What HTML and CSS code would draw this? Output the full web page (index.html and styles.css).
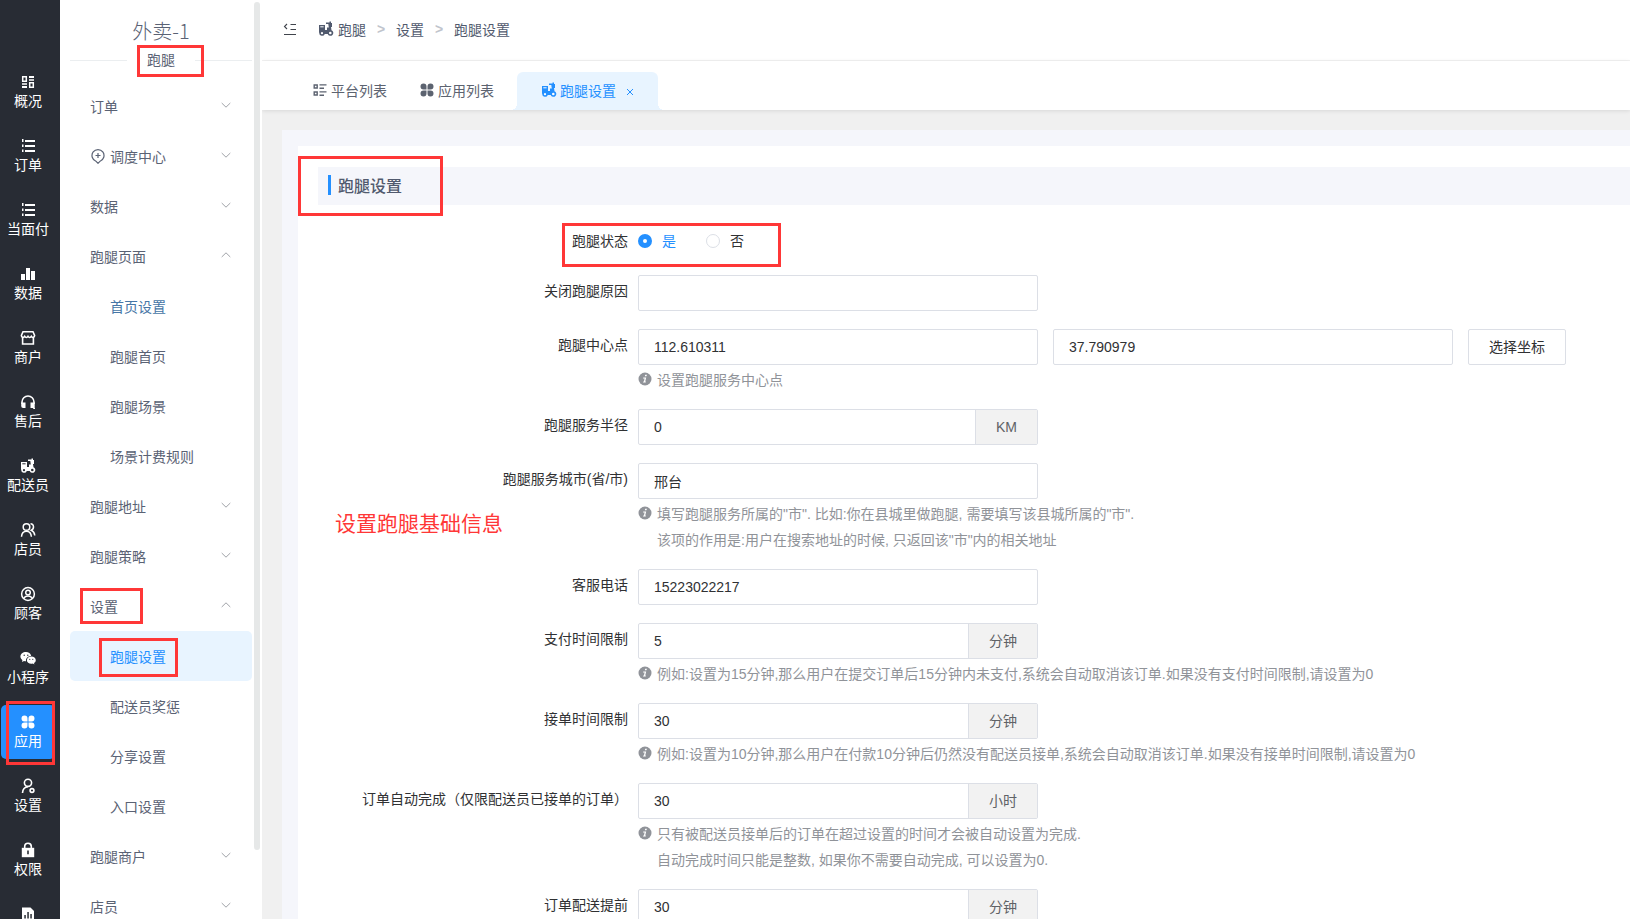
FILE: index.html
```html
<!DOCTYPE html>
<html lang="zh-CN">
<head>
    <meta charset="UTF-8" />
    <meta name="viewport" content="width=device-width, initial-scale=1.0" />
    <title>跑腿设置</title>
    <link rel="stylesheet" href="styles.css">
</head>
<body>

    <!-- icon sprite -->
    <svg class="sprite" xmlns="http://www.w3.org/2000/svg">
        <symbol id="i-grid" viewBox="0 0 16 16"><path d="M2.700 2.700h3.600v4.600H2.700zM9.700 8.700h3.600v4.600H9.700z" fill="none" stroke="currentColor" stroke-width="1.500"/><path d="M9 2h5v2H9zM9 5.200h5v1.600H9zM2 9.200h5v1.600H2zM2 12h5v2H2z"/></symbol>
        <symbol id="i-list" viewBox="0 0 16 16"><path d="M5 2h10v2H5zM5 7h10v2H5zM5 12h10v2H5zM2 1h1.500v3H2zM2 6.500h1.500v2.500H2zM2 11.500h1.500V14H2z"/></symbol>
        <symbol id="i-bars" viewBox="0 0 16 16"><path d="M1 8h4v6H1zM6 2h4v12H6zM11 5h4v9h-4z"/></symbol>
        <symbol id="i-shop" viewBox="0 0 16 16"><path d="M3 1.800h10l1.600 3.600c0 2-2.400 2.600-3.300 1-.8 1.400-2.500 1.400-3.300 0-.8 1.400-2.500 1.400-3.300 0-.9 1.600-3.300 1-3.300-1zM2.600 7.500V14h10.800V7.500" fill="none" stroke="currentColor" stroke-width="1.600"/></symbol>
        <symbol id="i-headset" viewBox="0 0 16 16"><path d="M2 10V8a6 6 0 0 1 12 0v2" fill="none" stroke="currentColor" stroke-width="1.600"/><path d="M1.300 8.500h4.200V14H3.200a2 2 0 0 1-2-2zM10.500 8.500h4.200V14H15v1h-1.500L12.800 14h-2.300z"/></symbol>
        <symbol id="i-scooter" viewBox="0 0 16 16"><path d="M1 4h6v5h2V6.500h1.800L10.300 3H8V1.500h3.500V.5H13V2h1v4h-1l.5 3.200a2.900 2.900 0 1 1-3.800 3.800H6.800A2.900 2.900 0 0 1 1.200 12L1 11z"/><circle cx="4" cy="12.200" r="1.100" class="hole"/><circle cx="12.300" cy="12" r="1.300" class="hole"/><path d="M2.300 5.300h3.300v1H2.300z" class="hole"/></symbol>
        <symbol id="i-users" viewBox="0 0 16 16"><g fill="none" stroke="currentColor" stroke-width="1.500"><circle cx="6.500" cy="5" r="3.300"/><path d="M1.500 14.800c.2-3.300 2.200-5.500 5-5.500s4.600 2.200 4.900 5.500M10.500 1.700c3.700.3 4 5 .8 6.500 2 .8 3.200 2.600 3.500 5.300"/></g></symbol>
        <symbol id="i-user-circle" viewBox="0 0 16 16"><g fill="none" stroke="currentColor" stroke-width="1.500"><circle cx="8" cy="8" r="6.400"/><circle cx="8" cy="6.500" r="2.300"/><path d="M3.800 12.500c1.500-3.500 6.900-3.500 8.400 0"/></g></symbol>
        <symbol id="i-wechat" viewBox="0 0 16 16"><path d="M6 2C2.900 2 .4 4 .4 6.600c0 1.500.8 2.700 2 3.600L2 12l2-1c.7.2 1.300.2 2 .2-.3-3 2-5.200 5.200-5.200C10.700 3.600 8.600 2 6 2z"/><path d="M15.800 10.200c0-2-2-3.600-4.500-3.600s-4.400 1.600-4.400 3.600 1.900 3.600 4.400 3.600c.6 0 1.100-.1 1.600-.2l1.500.8-.4-1.300c1.100-.7 1.800-1.700 1.800-2.900z"/><g class="hole"><circle cx="4.200" cy="5.300" r=".7"/><circle cx="7.800" cy="5.300" r=".7"/><circle cx="9.800" cy="9.300" r=".6"/><circle cx="12.800" cy="9.300" r=".6"/></g></symbol>
        <symbol id="i-apps" viewBox="0 0 16 16"><path d="M4.500 1.500a3 3 0 0 1 3 3v3h-3a3 3 0 0 1 0-6zM11.500 1.500a3 3 0 0 1 0 6h-3v-3a3 3 0 0 1 3-3zM4.500 8.500h3v3a3 3 0 1 1-3-3zM8.500 8.500h3a3 3 0 1 1-3 3z"/></symbol>
        <symbol id="i-user-gear" viewBox="0 0 16 16"><g fill="none" stroke="currentColor" stroke-width="1.600"><circle cx="8" cy="4.800" r="3.600"/><path d="M2.500 15c.2-3.500 2.500-6 5.500-6.200"/><circle cx="12" cy="12.500" r="1.900"/></g></symbol>
        <symbol id="i-lock" viewBox="0 0 16 16"><path d="M4.700 6V4.500a3.300 3.300 0 0 1 6.600 0V6" fill="none" stroke="currentColor" stroke-width="1.600"/><path d="M1.800 5.800h12.400v9.400H1.800z"/><path d="M7.200 8.500h1.600v3.800H7.200z" class="hole"/></symbol>
        <symbol id="i-report" viewBox="0 0 16 16"><path d="M2 1.500h8.500L14 5v10H2z"/><path d="M4.300 9h1.500v3.500H4.300zM7.300 6h1.500v6.500H7.300zM10.300 8h1.500v4.500h-1.500z" class="hole"/></symbol>
        <symbol id="i-pin" viewBox="0 0 16 16"><path d="M5.900 13.200 8 15.300l2.100-2.100A6 6 0 1 0 5.900 13.200zM8 5v5M5.500 7.500h5" fill="none" stroke="currentColor" stroke-width="1.200"/></symbol>
        <symbol id="i-fold" viewBox="0 0 16 16"><path d="M8.500 3.500H14M8.500 8.500H14M2 13.500h12M5 3 2.500 5.500 5 8" fill="none" stroke="currentColor" stroke-width="1.100"/></symbol>
        <symbol id="i-platform" viewBox="0 0 16 16"><path d="M2.200 3h3v3h-3zM2.200 10h3v3h-3z" fill="none" stroke="currentColor" stroke-width="1.400"/><path d="M7.500 2.200h7v1.400h-7zM7.500 5.500H12v1.400H7.500zM7.500 9.200h7v1.400h-7zM7.500 12.500H12v1.400H7.500z"/></symbol>
        <symbol id="i-down" viewBox="0 0 10 10"><path d="m.7 3 4.300 4.200L9.300 3" fill="none" stroke="currentColor"/></symbol>
        <symbol id="i-up" viewBox="0 0 10 10"><path d="M.7 7 5 2.800 9.300 7" fill="none" stroke="currentColor"/></symbol>
        <symbol id="i-close" viewBox="0 0 8 8"><path d="m1 1 6 6M7 1 1 7" fill="none" stroke="currentColor"/></symbol>
        <symbol id="i-info" viewBox="0 0 14 14"><circle cx="7" cy="7" r="6.500"/><path d="M7.200 2.700h1.700l-.4 1.600H6.800zM5.300 5.500h2.900l-1 4h.7l-.2 1H5l.3-1h.6l.7-3H5z" fill="#fff"/></symbol>
    </svg>

    <nav class="rail">
        <a href="#" class="rail-item"><svg><use href="#i-grid"/></svg><span>概况</span></a>
        <a href="#" class="rail-item"><svg><use href="#i-list"/></svg><span>订单</span></a>
        <a href="#" class="rail-item"><svg><use href="#i-list"/></svg><span>当面付</span></a>
        <a href="#" class="rail-item"><svg><use href="#i-bars"/></svg><span>数据</span></a>
        <a href="#" class="rail-item"><svg><use href="#i-shop"/></svg><span>商户</span></a>
        <a href="#" class="rail-item"><svg><use href="#i-headset"/></svg><span>售后</span></a>
        <a href="#" class="rail-item"><svg><use href="#i-scooter"/></svg><span>配送员</span></a>
        <a href="#" class="rail-item"><svg><use href="#i-users"/></svg><span>店员</span></a>
        <a href="#" class="rail-item"><svg><use href="#i-user-circle"/></svg><span>顾客</span></a>
        <a href="#" class="rail-item"><svg><use href="#i-wechat"/></svg><span>小程序</span></a>
        <a href="#" class="rail-item active"><svg><use href="#i-apps"/></svg><span>应用</span><i class="mark mark-rail"></i></a>
        <a href="#" class="rail-item"><svg><use href="#i-user-gear"/></svg><span>设置</span></a>
        <a href="#" class="rail-item"><svg><use href="#i-lock"/></svg><span>权限</span></a>
        <a href="#" class="rail-item" aria-label="报表"><svg><use href="#i-report"/></svg></a>
    </nav>

    <aside class="side">
        <h2 class="side-title">外卖-1</h2>
        <div class="side-divider"><span>跑腿</span><i class="mark mark-divider"></i></div>
        <nav class="menu">
            <a href="#" class="menu-item">订单<svg class="arrow"><use href="#i-down"/></svg></a>
            <a href="#" class="menu-item"><svg class="pin"><use href="#i-pin"/></svg>调度中心<svg class="arrow"><use href="#i-down"/></svg></a>
            <a href="#" class="menu-item">数据<svg class="arrow"><use href="#i-down"/></svg></a>
            <a href="#" class="menu-item">跑腿页面<svg class="arrow"><use href="#i-up"/></svg></a>
            <a href="#" class="menu-item sub hovered">首页设置</a>
            <a href="#" class="menu-item sub">跑腿首页</a>
            <a href="#" class="menu-item sub">跑腿场景</a>
            <a href="#" class="menu-item sub">场景计费规则</a>
            <a href="#" class="menu-item">跑腿地址<svg class="arrow"><use href="#i-down"/></svg></a>
            <a href="#" class="menu-item">跑腿策略<svg class="arrow"><use href="#i-down"/></svg></a>
            <a href="#" class="menu-item">设置<svg class="arrow"><use href="#i-up"/></svg><i class="mark mark-menu"></i></a>
            <a href="#" class="menu-item sub active">跑腿设置<i class="mark mark-submenu"></i></a>
            <a href="#" class="menu-item sub">配送员奖惩</a>
            <a href="#" class="menu-item sub">分享设置</a>
            <a href="#" class="menu-item sub">入口设置</a>
            <a href="#" class="menu-item">跑腿商户<svg class="arrow"><use href="#i-down"/></svg></a>
            <a href="#" class="menu-item">店员<svg class="arrow"><use href="#i-down"/></svg></a>
        </nav>
        <div class="side-scroll"></div>
    </aside>

    <main class="main">
        <header class="topbar">
            <button type="button" class="fold" aria-label="收起菜单"><svg><use href="#i-fold"/></svg></button>
            <a href="#" class="crumb"><svg><use href="#i-scooter"/></svg>跑腿</a>
            <span class="crumb-sep">&gt;</span>
            <a href="#" class="crumb">设置</a>
            <span class="crumb-sep">&gt;</span>
            <span class="crumb">跑腿设置</span>
        </header>

        <div class="tabs">
            <a href="#" class="tab"><svg><use href="#i-platform"/></svg>平台列表</a>
            <a href="#" class="tab"><svg><use href="#i-apps"/></svg>应用列表</a>
            <div class="tab active">
                <svg><use href="#i-scooter"/></svg>跑腿设置
                <button type="button" class="tab-close" aria-label="关闭"><svg><use href="#i-close"/></svg></button>
            </div>
        </div>

        <div class="content">
            <div class="card">
                <div class="panel">
                    <h3 class="section-title">跑腿设置</h3>
                    <i class="mark mark-title"></i>
                    <p class="note">设置跑腿基础信息</p>

                    <form class="form">
                        <div class="row">
                            <span class="label" id="status-label">跑腿状态</span>
                            <div class="field radios" role="radiogroup" aria-labelledby="status-label">
                                <label class="radio"><input type="radio" name="status" checked><span>是</span></label>
                                <label class="radio"><input type="radio" name="status"><span>否</span></label>
                            </div>
                            <i class="mark mark-status"></i>
                        </div>

                        <div class="row">
                            <label class="label" for="reason">关闭跑腿原因</label>
                            <div class="field"><div class="group"><input type="text" id="reason"></div></div>
                        </div>

                        <div class="row">
                            <label class="label" for="lng">跑腿中心点</label>
                            <div class="field">
                                <div class="inline">
                                    <div class="group"><input type="text" id="lng" value="112.610311"></div>
                                    <div class="group"><input type="text" id="lat" aria-label="纬度" value="37.790979"></div>
                                    <button type="button" class="btn">选择坐标</button>
                                </div>
                                <div class="help"><svg><use href="#i-info"/></svg><p>设置跑腿服务中心点</p></div>
                            </div>
                        </div>

                        <div class="row">
                            <label class="label" for="radius">跑腿服务半径</label>
                            <div class="field"><div class="group"><input type="text" id="radius" value="0"><span class="addon">KM</span></div></div>
                        </div>

                        <div class="row">
                            <label class="label" for="city">跑腿服务城市(省/市)</label>
                            <div class="field">
                                <div class="group"><input type="text" id="city" value="邢台"></div>
                                <div class="help"><svg><use href="#i-info"/></svg><p>填写跑腿服务所属的"市". 比如:你在县城里做跑腿, 需要填写该县城所属的"市".<br>该项的作用是:用户在搜索地址的时候, 只返回该"市"内的相关地址</p></div>
                            </div>
                        </div>

                        <div class="row">
                            <label class="label" for="phone">客服电话</label>
                            <div class="field"><div class="group"><input type="text" id="phone" value="15223022217"></div></div>
                        </div>

                        <div class="row">
                            <label class="label" for="pay">支付时间限制</label>
                            <div class="field">
                                <div class="group"><input type="text" id="pay" value="5"><span class="addon">分钟</span></div>
                                <div class="help"><svg><use href="#i-info"/></svg><p>例如:设置为15分钟,那么用户在提交订单后15分钟内未支付,系统会自动取消该订单.如果没有支付时间限制,请设置为0</p></div>
                            </div>
                        </div>

                        <div class="row">
                            <label class="label" for="accept">接单时间限制</label>
                            <div class="field">
                                <div class="group"><input type="text" id="accept" value="30"><span class="addon">分钟</span></div>
                                <div class="help"><svg><use href="#i-info"/></svg><p>例如:设置为10分钟,那么用户在付款10分钟后仍然没有配送员接单,系统会自动取消该订单.如果没有接单时间限制,请设置为0</p></div>
                            </div>
                        </div>

                        <div class="row">
                            <label class="label" for="finish">订单自动完成（仅限配送员已接单的订单）</label>
                            <div class="field">
                                <div class="group"><input type="text" id="finish" value="30"><span class="addon">小时</span></div>
                                <div class="help"><svg><use href="#i-info"/></svg><p>只有被配送员接单后的订单在超过设置的时间才会被自动设置为完成.<br>自动完成时间只能是整数, 如果你不需要自动完成, 可以设置为0.</p></div>
                            </div>
                        </div>

                        <div class="row">
                            <label class="label" for="ahead">订单配送提前</label>
                            <div class="field"><div class="group"><input type="text" id="ahead" value="30"><span class="addon">分钟</span></div></div>
                        </div>
                    </form>
                </div>
            </div>
        </div>
    </main>

</body>
</html>
```

FILE: styles.css
```css
* {
    box-sizing: border-box;
}

body {
    margin: 0;
    display: flex;
    height: 100vh;
    overflow: hidden;
    font-family: "Liberation Sans", "Noto Sans CJK SC", sans-serif;
    font-size: 14px;
    color: #303133;
    background: #f0f0f0;
}

a {
    color: inherit;
    text-decoration: none;
}

h2, h3, p {
    margin: 0;
}

button, input {
    font: inherit;
    color: inherit;
}

svg {
    fill: currentColor;
    flex: none;
}

.sprite {
    position: absolute;
    width: 0;
    height: 0;
}

.hole {
    fill: var(--hole, #fff);
}

/* red highlight frames, drawn over the page */
.mark {
    position: absolute;
    z-index: 5;
    border: 3px solid #ff3737;
    pointer-events: none;
}

/* left rail */
.rail {
    --hole: #282c34;
    flex: none;
    width: 60px;
    padding: 65px 5px 0 1px;
    display: flex;
    flex-direction: column;
    gap: 10px;
    background: #282c34;
    color: #fff;
    overflow: hidden;
}

.rail-item {
    position: relative;
    flex: none;
    height: 54px;
    padding-top: 9px;
    display: flex;
    flex-direction: column;
    align-items: center;
    gap: 1px;
    line-height: 20px;
    white-space: nowrap;
    border-radius: 5px;
}

.rail-item svg {
    width: 16px;
    height: 16px;
}

.rail-item.active {
    background: #2490ff;
}

.mark-rail {
    inset: -4px 0 -6px 5px;
}

/* second level menu */
.side {
    position: relative;
    flex: none;
    width: 202px;
    padding: 0 10px;
    background: #fff;
    color: #5a6274;
    overflow: hidden;
}

.side-title {
    height: 60px;
    font-family: "Noto Sans CJK SC", sans-serif;
    font-size: 20px;
    font-weight: 300;
    line-height: 62px;
    text-align: center;
}

.side-divider {
    position: relative;
    width: 182px;
    height: 1px;
    margin-bottom: 20px;
    display: flex;
    align-items: center;
    gap: 20px;
}

.side-divider span {
    margin-bottom: 3px;
}

.side-divider::before,
.side-divider::after {
    content: "";
    flex: 1;
    height: 1px;
    background: #ebeef0;
}

.mark-divider {
    top: -15px;
    left: 67px;
    width: 67px;
    height: 32px;
}

.menu-item {
    position: relative;
    height: 50px;
    padding: 0 20px;
    display: flex;
    align-items: center;
    border-radius: 5px;
}

.menu-item.sub {
    padding-left: 40px;
}

.menu-item.hovered {
    color: #4676a6;
}

.menu-item.active {
    background: #e8f4ff;
    color: #2490ff;
}

.pin {
    width: 16px;
    height: 16px;
    margin-right: 4px;
}

.arrow {
    width: 10px;
    height: 10px;
    margin: 0 1px 3px auto;
    color: #a0a3a8;
}

.mark-menu {
    top: 7px;
    left: 10px;
    width: 63px;
    height: 36px;
}

.mark-submenu {
    top: 7px;
    left: 29px;
    width: 79px;
    height: 39px;
}

.side-scroll {
    position: absolute;
    top: 2px;
    right: 2px;
    bottom: 69px;
    width: 6px;
    border-radius: 3px;
    background: #e6e8e8;
}

/* main area */
.main {
    flex: 1;
    min-width: 0;
    display: flex;
    flex-direction: column;
    box-shadow: 0 0 4px rgba(0, 0, 0, 0.08);
}

.topbar {
    flex: none;
    height: 61px;
    padding: 0 20px 2px;
    display: flex;
    align-items: center;
    background: #fff;
    border-bottom: 1px solid #f2f2f2;
    color: #515a6e;
}

.fold {
    padding: 0;
    border: 0;
    background: none;
    display: flex;
    margin-right: 20px;
    color: #40444c;
}

.fold svg,
.tab > svg {
    width: 16px;
    height: 16px;
}

.crumb {
    display: flex;
    align-items: center;
    gap: 4px;
}

.crumb svg {
    width: 16px;
    height: 16px;
}

.crumb-sep {
    width: 30px;
    text-align: center;
    font-weight: bold;
    color: #c0c4cc;
}

.tabs {
    flex: none;
    height: 49px;
    padding-left: 50px;
    display: flex;
    align-items: flex-end;
    gap: 32px;
    background: #fff;
    color: #5c6370;
    box-shadow: 0 1px 4px rgba(0, 0, 0, 0.1);
}

.tab {
    position: relative;
    height: 38px;
    padding-bottom: 2px;
    display: flex;
    align-items: center;
    gap: 3px;
}

.tab.active {
    margin-left: -9px;
    padding: 0 24px 2px;
    background: #e8f4ff;
    color: #2490ff;
    border-radius: 6px 6px 0 0;
}

.tab.active::before,
.tab.active::after {
    content: "";
    position: absolute;
    bottom: 0;
    width: 6px;
    height: 6px;
}

.tab.active::before {
    right: 100%;
    background: radial-gradient(circle at 0 0, transparent 6px, #e8f4ff 6px);
}

.tab.active::after {
    left: 100%;
    background: radial-gradient(circle at 100% 0, transparent 6px, #e8f4ff 6px);
}

.tab-close {
    display: flex;
    margin: 4px 0 0 7px;
    padding: 0;
    border: 0;
    background: none;
}

.tab-close svg {
    width: 8px;
    height: 8px;
}

.content {
    flex: 1;
    min-height: 0;
    padding: 20px 0 0 20px;
    overflow: hidden;
}

.card {
    padding: 16px 0 16px 16px;
    background: #f5f6fb;
}

.panel {
    position: relative;
    padding: 21px 0 20px 20px;
    background: #fff;
}

.section-title {
    height: 38px;
    margin-bottom: 20px;
    padding: 0 10px 2px;
    display: flex;
    align-items: center;
    gap: 7px;
    background: #f5f6fb;
    color: #515a6e;
    font-size: 16px;
    font-weight: 500;
}

.section-title::before {
    content: "";
    width: 3px;
    height: 20px;
    background: #2490ff;
}

.mark-title {
    top: 10px;
    left: 0;
    width: 145px;
    height: 60px;
}

.note {
    position: absolute;
    top: 362px;
    left: 37px;
    font-size: 21px;
    line-height: 32px;
    color: #ff3737;
}

.row {
    position: relative;
    display: flex;
    margin-bottom: 18px;
}

.label {
    flex: none;
    width: 320px;
    padding-right: 10px;
    line-height: 32px;
    text-align: right;
    white-space: nowrap;
}

.field {
    flex: 1;
    min-width: 0;
}

.radios {
    display: flex;
    gap: 30px;
    line-height: 32px;
}

.radio {
    display: flex;
    align-items: center;
    gap: 10px;
}

.radio input {
    appearance: none;
    width: 14px;
    height: 14px;
    margin: 0;
    border: 1px solid #dcdfe6;
    border-radius: 50%;
    background: #fff;
}

.radio input:checked {
    border: 5px solid #2490ff;
}

.radio input:checked + span {
    color: #2490ff;
}

.mark-status {
    top: -2px;
    left: 244px;
    width: 219px;
    height: 44px;
}

.inline {
    display: flex;
    gap: 15px;
}

.group {
    display: flex;
    width: 400px;
    height: 36px;
    border: 1px solid #dcdfe6;
    border-radius: 2px;
    background: #fff;
}

.group input {
    flex: 1;
    min-width: 0;
    padding: 0 15px;
    border: 0;
    outline: none;
    background: none;
}

.addon {
    padding: 0 20px;
    border-left: 1px solid #dcdfe6;
    background: #f2f2f2;
    color: #606266;
    line-height: 34px;
}

.btn {
    height: 36px;
    padding: 0 20px 2px;
    border: 1px solid #dcdfe6;
    border-radius: 2px;
    background: #fff;
}

/* hint line sits slightly lower than the field grid */
.help {
    display: flex;
    gap: 5px;
    margin: 2px 0 -2px;
    color: #909399;
    line-height: 26px;
}

.help svg {
    width: 14px;
    height: 14px;
    margin-top: 5px;
}
```
